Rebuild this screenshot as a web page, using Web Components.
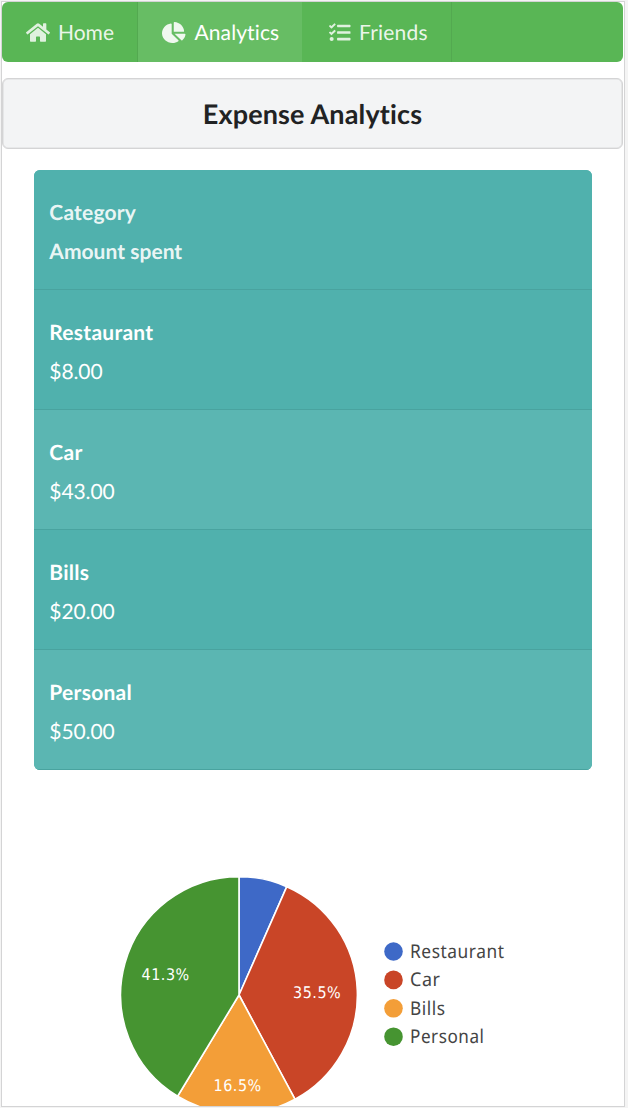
<!DOCTYPE html>
<html lang="en">
<head>
<meta charset="utf-8">
<title>Expense Analytics</title>
<style>
html,body{margin:0;height:100%;overflow:hidden}
body{background:#f4f4f4;font-family:Lato,"Liberation Sans",sans-serif;font-size:21px;font-variant-ligatures:none;text-rendering:geometricPrecision}
</style>
</head>
<body>
<app-frame>
  <nav-bar>
    <nav-item icon="home" style="width:136px">Home</nav-item>
    <nav-item icon="pie" active style="width:164px">Analytics</nav-item>
    <nav-item icon="tasks" style="width:150px">Friends</nav-item>
  </nav-bar>
  <page-title>Expense Analytics</page-title>
  <expense-table>
    <expense-row head>Category<span slot="amount">Amount spent</span></expense-row>
    <expense-row>Restaurant<span slot="amount">$8.00</span></expense-row>
    <expense-row striped>Car<span slot="amount">$43.00</span></expense-row>
    <expense-row>Bills<span slot="amount">$20.00</span></expense-row>
    <expense-row striped>Personal<span slot="amount">$50.00</span></expense-row>
  </expense-table>
  <pie-chart></pie-chart>
</app-frame>
<script>
const define = (name, html, setup) => customElements.define(name, class extends HTMLElement {
  constructor() {
    super();
    this.attachShadow({ mode: 'open' });
  }
  connectedCallback() {
    this.shadowRoot.innerHTML = html;
    if (setup) setup(this);
  }
});

const ICONS = {
  home: ['0 0 576 512', 24, 'M280.37 148.26L96 300.11V464a16 16 0 0 0 16 16l112.06-.29a16 16 0 0 0 15.92-16V368a16 16 0 0 1 16-16h64a16 16 0 0 1 16 16v95.64a16 16 0 0 0 16 16.05L464 480a16 16 0 0 0 16-16V300L295.67 148.26a12.19 12.19 0 0 0-15.3 0zM571.6 251.47L488 182.56V44.05a12 12 0 0 0-12-12h-56a12 12 0 0 0-12 12v72.61L318.47 43a48 48 0 0 0-61 0L4.34 251.47a12 12 0 0 0-1.6 16.9l25.5 31A12 12 0 0 0 45.15 301l235.22-193.74a12.19 12.19 0 0 1 15.3 0L530.9 301a12 12 0 0 0 16.9-1.6l25.5-31a12 12 0 0 0-1.7-16.93z'],
  pie: ['0 0 544 512', 23.5, 'M527.79 288H290.5l158.03 158.03c6.04 6.04 15.98 6.53 22.19.68 38.7-36.46 65.32-85.61 73.13-140.86 1.34-9.46-6.51-17.85-16.06-17.85zm-15.83-64.8C503.72 103.74 408.26 8.28 288.8.04 279.68-.59 272 7.1 272 16.24V240h223.77c9.14 0 16.82-7.68 16.19-16.8zM224 288V50.71c0-9.55-8.39-17.4-17.84-16.06C86.99 51.49-4.1 155.6.14 280.37 4.5 408.51 114.83 513.59 243.03 511.98c50.4-.63 96.97-16.87 135.26-44.03 7.9-5.6 8.42-17.23 1.57-24.08L224 288z'],
  tasks: ['0 0 512 512', 21.5, 'M139.61 35.5a12 12 0 0 0-17 0L58.93 98.81l-22.7-22.12a12 12 0 0 0-17 0L3.53 92.41a12 12 0 0 0 0 17l47.59 47.4a12.78 12.78 0 0 0 17.61 0l15.59-15.62L156.52 69a12.09 12.09 0 0 0 .09-17zm0 159.19a12 12 0 0 0-17 0l-63.68 63.72-22.7-22.1a12 12 0 0 0-17 0L3.53 252a12 12 0 0 0 0 17L51 316.5a12.77 12.77 0 0 0 17.6 0l15.7-15.69 72.2-72.22a12 12 0 0 0 .09-16.9zM64 368c-26.49 0-48.59 21.5-48.59 48S37.53 464 64 464a48 48 0 0 0 0-96zm432 16H208a16 16 0 0 0-16 16v32a16 16 0 0 0 16 16h288a16 16 0 0 0 16-16v-32a16 16 0 0 0-16-16zm0-320H208a16 16 0 0 0-16 16v32a16 16 0 0 0 16 16h288a16 16 0 0 0 16-16V80a16 16 0 0 0-16-16zm0 160H208a16 16 0 0 0-16 16v32a16 16 0 0 0 16 16h288a16 16 0 0 0 16-16v-32a16 16 0 0 0-16-16z']
};

define('app-frame', `<style>
:host{display:block;box-sizing:border-box;margin:1px 0 0 1px;width:624px;height:1106px;border:1px solid #d4d4d5;background:#fff;overflow:hidden}
</style><slot></slot>`);

define('nav-bar', `<style>
:host{display:flex;width:621px;height:60px;border-radius:6px;background:#59b655;overflow:hidden}
</style><slot></slot>`);

define('nav-item', `<style>
:host{display:flex;flex:none;box-sizing:border-box;align-items:center;padding:0 0 0 24px;color:rgba(255,255,255,.9);border-right:1px solid #53a950;white-space:nowrap;line-height:26px;letter-spacing:.1px}
:host([icon=home]){padding-left:23.5px;letter-spacing:0}
:host([icon=pie]){padding-left:23.5px;border-right-color:#67bd64}
:host([icon=tasks]){padding-left:27px;letter-spacing:.2px}
:host([active]){background:#67bd64;color:#fff}
.icon{display:flex;justify-content:center;width:25px;margin-right:7.5px}
.label{padding-top:2px}
svg{display:block;height:21px;fill:currentColor;opacity:.9;flex:none}
:host([icon=pie]) .icon{margin-right:8px}
:host([icon=tasks]) .icon{width:22px;margin-right:8px}
</style><span class="icon"></span><span class="label"><slot></slot></span>`, el => {
  const [box, width, path] = ICONS[el.getAttribute('icon')];
  el.shadowRoot.querySelector('.icon').innerHTML =
    `<svg viewBox="${box}" width="${width}" preserveAspectRatio="none"><path d="${path}"/></svg>`;
});

define('page-title', `<style>
:host{display:flex;box-sizing:border-box;justify-content:center;align-items:center;width:621px;height:71px;margin-top:16px;border:1px solid #d4d4d5;box-shadow:inset 0 0 0 .6px #dcdcdd;border-radius:6px;background:#f3f4f5;color:#212223;font-size:27px;font-weight:700;line-height:34px;letter-spacing:.15px}
</style><span><slot></slot></span>`);

define('expense-table', `<style>
:host{display:block;width:558px;height:600px;margin:21px 0 0 31.5px;border-radius:6px;overflow:hidden;background:#50b1ad}
</style><slot></slot>`);

define('expense-row', `<style>
:host{display:flex;flex-direction:column;box-sizing:border-box;height:120px;padding:23px 16px 0 15.8px;border-bottom:1px solid #49a39f;color:#fff;background:#50b1ad}
:host([striped]){background:#5bb6b2}
:host([head]){color:rgba(255,255,255,.9)}
div{line-height:39px;letter-spacing:-.1px}
.name{letter-spacing:.27px}
:host([head]) .name{letter-spacing:.2px}
:host([head]) .amount{letter-spacing:.03px}
.name,:host([head]) div{font-weight:700}
</style><div class="name"><slot></slot></div><div class="amount"><slot name="amount"></slot></div>`);

define('pie-chart', `<style>
:host{display:block;height:337px}
svg{display:block}
.slice{stroke:#fff;stroke-width:1.6;stroke-linejoin:round}
.pct{font:16px "DejaVu Sans",sans-serif;fill:#fff;letter-spacing:.6px}
.key{font:19px "Noto Sans","Open Sans",sans-serif;fill:#444;letter-spacing:.6px}
</style><svg width="622" height="337" viewBox="2 770 622 337"></svg>`, el => {
  const data = [['Restaurant', 8, '#3e69c7', 94.5], ['Car', 43, '#c94527', 30.5], ['Bills', 20, '#f39e38', 35.5], ['Personal', 50, '#469431', 74.5]];
  const total = data.reduce((sum, d) => sum + d[1], 0);
  const cx = 239, cy = 995, r = 118.4;
  const at = v => {
    const a = v / total * 2 * Math.PI;
    return `${cx + r * Math.sin(a)} ${cy - r * Math.cos(a)}`;
  };
  let sum = 0, out = '';
  for (const [, value, color] of data) {
    out += `<path class="slice" fill="${color}" d="M${cx} ${cy}L${at(sum)}A${r} ${r} 0 0 1 ${at(sum + value)}Z"/>`;
    sum += value;
  }
  for (const [text, x, y] of [['41.3%', 141.5, 980], ['35.5%', 293, 998], ['16.5%', 213.5, 1091]])
    out += `<text class="pct" x="${x}" y="${y}" textLength="48.3" lengthAdjust="spacingAndGlyphs">${text}</text>`;
  data.forEach(([name, , color, width], i) => {
    const y = 951.5 + i * 28.4;
    out += `<circle cx="393.5" cy="${y}" r="9.3" fill="${color}"/><text class="key" x="410" y="${y + 6.5}" textLength="${width}" lengthAdjust="spacingAndGlyphs">${name}</text>`;
  });
  el.shadowRoot.querySelector('svg').innerHTML = out;
});
</script>
</body>
</html>
